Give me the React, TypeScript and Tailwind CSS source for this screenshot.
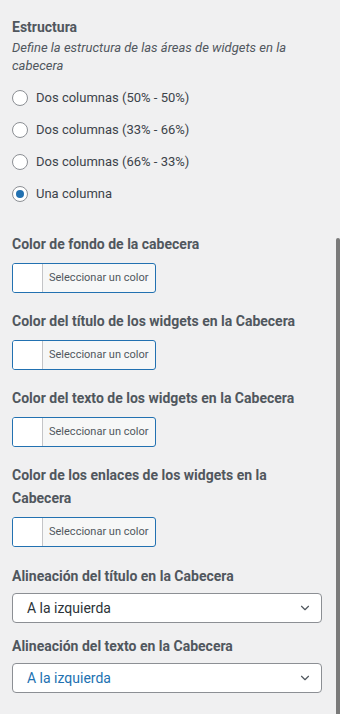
import { ChevronDown } from 'lucide-react'

const radios = [
  { label: 'Dos columnas (50% - 50%)', checked: false },
  { label: 'Dos columnas (33% - 66%)', checked: false },
  { label: 'Dos columnas (66% - 33%)', checked: false },
  { label: 'Una columna', checked: true },
]

const colorFields = [
  'Color de fondo de la cabecera',
  'Color del título de los widgets en la Cabecera',
  'Color del texto de los widgets en la Cabecera',
  'Color de los enlaces de los widgets en la Cabecera',
]

function Radio({ label, checked }: { label: string; checked: boolean }) {
  return (
    <label className="flex items-center h-4 gap-[8px]">
      <span className="w-4 h-4 rounded-full border border-[#8c8f94] bg-white flex items-center justify-center shrink-0">
        {checked && <span className="w-2 h-2 rounded-full bg-[#2271b1]" />}
      </span>
      <span className="text-[13px] text-[#3c434a]">{label}</span>
    </label>
  )
}

function ColorPicker() {
  return (
    <button className="flex h-[30px] w-[144px] rounded-[3px] border border-[#2271b1] bg-[#f6f7f7] overflow-hidden">
      <span className="w-[30px] h-full bg-white border-r border-[#c3c4c7]" />
      <span className="flex-1 flex items-center pl-[6px] text-[11px] text-[#50575e]">
        Seleccionar un color
      </span>
    </button>
  )
}

function Select({ value, active }: { value: string; active?: boolean }) {
  return (
    <div className="flex items-center justify-between h-[30px] w-[310px] rounded-[4px] border border-[#8c8f94] bg-white pl-[14px] pr-[9px]">
      <span className={`text-[14px] ${active ? 'text-[#2271b1]' : 'text-[#2c3338]'}`}>{value}</span>
      <ChevronDown size={14} strokeWidth={2} className="text-[#50575e]" />
    </div>
  )
}

export default function App() {
  return (
    <div
      className="relative w-full h-[714px] overflow-hidden bg-[#f0f0f1] text-[#50575e]"
      style={{ fontFamily: 'Roboto, "Noto Sans", sans-serif' }}
    >
      <div className="pl-3 pr-5 pt-4">
        {/* Estructura */}
        <h3 className="text-[14px] font-bold leading-[23px]">Estructura</h3>
        <p className="text-[13px] italic leading-[18px]">
          Define la estructura de las áreas de widgets en la cabecera
        </p>
        <div className="flex flex-col gap-4 mt-[15px]">
          {radios.map((r) => (
            <Radio key={r.label} {...r} />
          ))}
        </div>

        {/* Colores */}
        <div className="flex flex-col gap-[17px] mt-[31px]">
          {colorFields.map((f) => (
            <div key={f}>
              <div className="text-[14px] font-bold leading-[23px] pr-3">{f}</div>
              <div className="mt-[7px]">
                <ColorPicker />
              </div>
            </div>
          ))}
        </div>

        {/* Alineación */}
        <div className="mt-[18px]">
          <div className="text-[14px] font-bold leading-[23px]">Alineación del título en la Cabecera</div>
          <div className="mt-[5px]">
            <Select value="A la izquierda" />
          </div>
        </div>
        <div className="mt-[12px]">
          <div className="text-[14px] font-bold leading-[23px]">Alineación del texto en la Cabecera</div>
          <div className="mt-[5px]">
            <Select value="A la izquierda" active />
          </div>
        </div>
      </div>

      {/* scrollbar thumb */}
      <div className="absolute right-0 top-[238px] w-[4px] h-[480px] rounded-t-[2px] bg-[#7a7a7a]" />
    </div>
  )
}
